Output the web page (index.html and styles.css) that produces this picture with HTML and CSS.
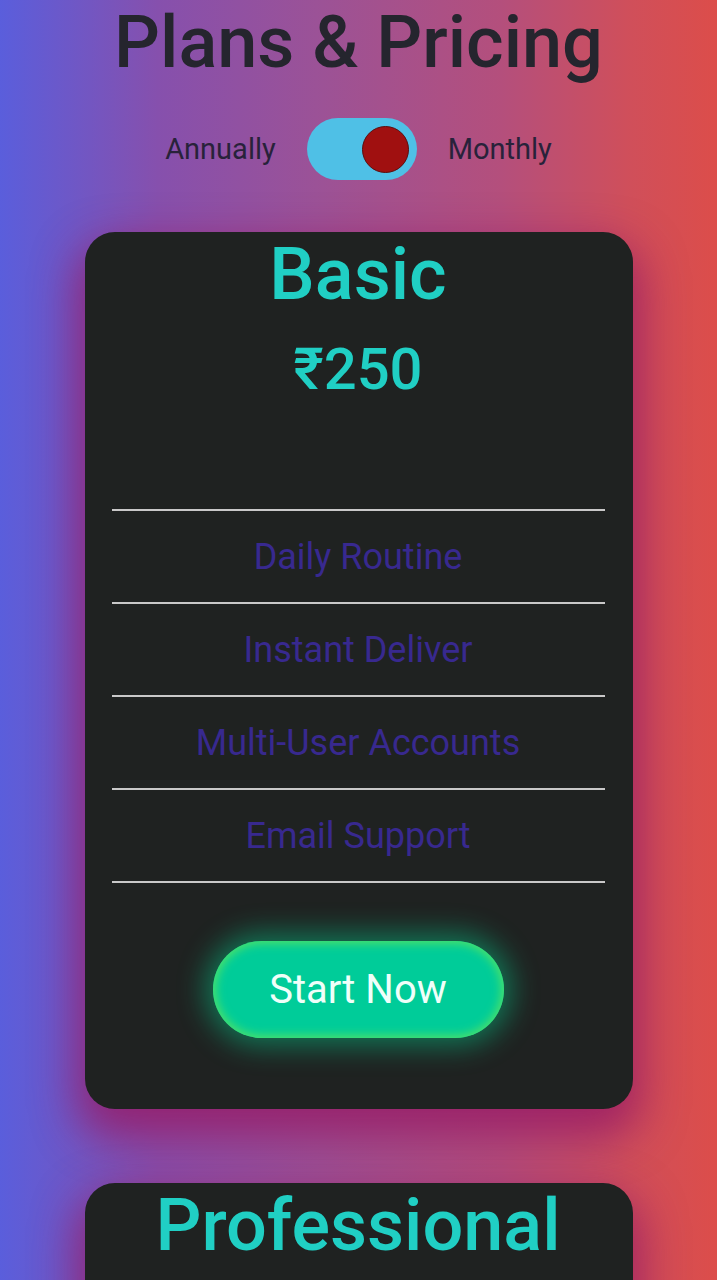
FILE: index.html
```html
<!DOCTYPE html>
<html lang="en">
<head>
<meta charset="utf-8">
<title>Plans &amp; Pricing</title>
<link rel="stylesheet" href="styles.css">
</head>
<body>
<main class="page">
  <h1 class="title">Plans &amp; Pricing</h1>
  <div class="switch-row">
    <span class="switch-label">Annually</span>
    <span class="switch"><span class="knob"></span></span>
    <span class="switch-label">Monthly</span>
  </div>

  <section class="card">
    <h2 class="plan-name">Basic</h2>
    <div class="price">₹250</div>
    <ul class="features">
      <li>Daily Routine</li>
      <li>Instant Deliver</li>
      <li>Multi-User Accounts</li>
      <li>Email Support</li>
    </ul>
    <button class="cta">Start Now</button>
  </section>

  <section class="card">
    <h2 class="plan-name">Professional</h2>
    <div class="price">₹500</div>
  </section>
</main>
</body>
</html>
```
FILE: styles.css
```css
* { box-sizing: border-box; }
html, body { margin: 0; padding: 0; }
body {
  font-family: Roboto, "Noto Sans", "DejaVu Sans", sans-serif;
  background: linear-gradient(90deg, #5a5edc 0%, #8650ad 22%, #9c5296 45%, #b44f7c 70%, #d04f5a 88%, #dc4d4a 100%);
  min-height: 1280px;
  overflow: hidden;
}
.page {
  display: flex;
  flex-direction: column;
  align-items: center;
}
.title {
  margin: 0;
  font-size: 72px;
  font-weight: 500;
  color: #25252e;
  line-height: normal;
}
.switch-row {
  margin-top: 33px;
  display: flex;
  align-items: center;
  gap: 31px;
}
.switch-label {
  font-size: 29px;
  color: #28223a;
}
.switch {
  width: 110px;
  height: 62px;
  border-radius: 31px;
  background: #4fc0e6;
  display: flex;
  align-items: center;
  justify-content: flex-end;
  padding-right: 8px;
}
.knob {
  width: 47px;
  height: 47px;
  border-radius: 50%;
  background: #a01010;
  border: 1px solid #5c0c0c;
}
.card {
  margin-top: 52px;
  width: 548px;
  background: #1f2221;
  border-radius: 30px;
  padding: 0 28px 71px 27px;
  display: flex;
  flex-direction: column;
  align-items: center;
  box-shadow: 0 20px 44px 8px rgba(150, 25, 100, 0.8);
}
.card + .card { margin-top: 74px; }
.plan-name {
  margin: 0;
  font-size: 72px;
  font-weight: 500;
  color: #20cfc4;
  line-height: normal;
}
.price {
  margin-top: 18px;
  font-size: 58px;
  font-weight: 500;
  color: #20cfc4;
  line-height: normal;
}
.features {
  list-style: none;
  margin: 106px 0 0;
  padding: 0;
  width: 100%;
  border-bottom: 2px solid #c9c9c9;
}
.features li {
  border-top: 2px solid #c9c9c9;
  height: 93px;
  display: flex;
  align-items: center;
  justify-content: center;
  font-size: 36px;
  color: #38298f;
}
.cta {
  margin-top: 58px;
  width: 291px;
  height: 97px;
  border: none;
  border-radius: 49px;
  background: #00cc99;
  color: #effff9;
  font-family: inherit;
  font-size: 40px;
  box-shadow: inset 0 0 10px 3px #4be06a, 0 0 28px 8px rgba(0, 220, 150, 0.45);
}
```
